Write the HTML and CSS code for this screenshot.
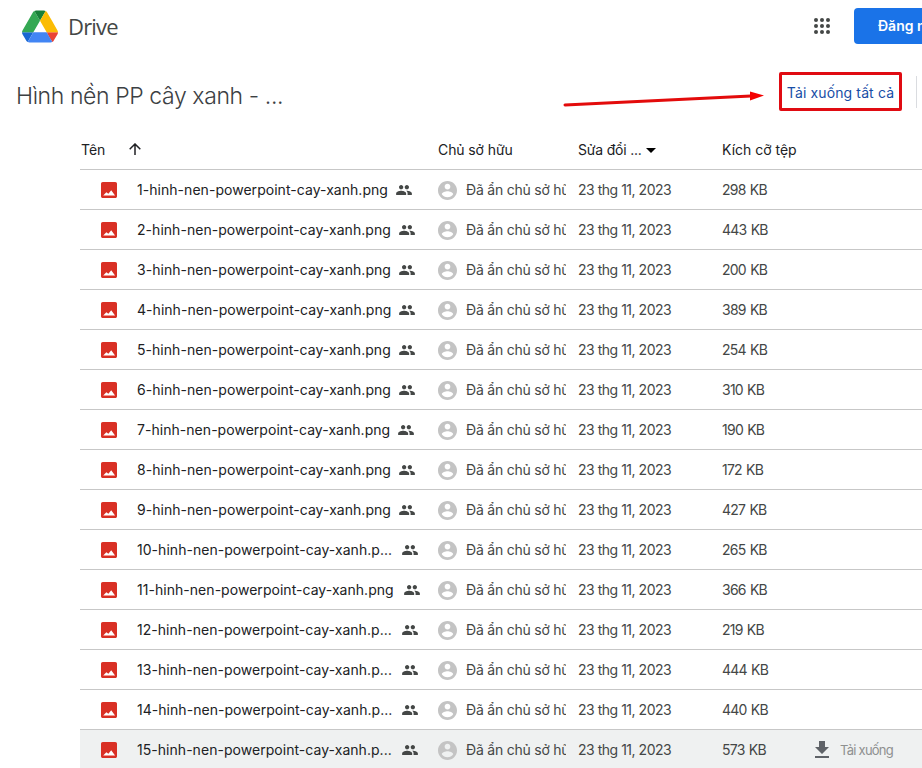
FILE: index.html
```
<!DOCTYPE html>
<html lang="vi">
<head>
    <meta charset="UTF-8">
    <meta name="viewport" content="width=device-width, initial-scale=1.0">
    <title>Hình nền PP cây xanh - Google Drive</title>
    <link rel="stylesheet" href="styles.css">
</head>
<body>
    <svg class="sprite">
        <symbol id="image" viewBox="3 3 18 18">
            <path d="M21 19V5c0-1.1-.9-2-2-2H5c-1.1 0-2 .9-2 2v14c0 1.1.9 2 2 2h14c1.1 0 2-.9 2-2z" fill="#d93025"/>
            <path d="M5.5 18.2l3.5-3.8 2.3 1.9 3.2-4.1 4.3 6z" fill="#fff"/>
        </symbol>
        <symbol id="people" viewBox="1 5 22 14">
            <path d="M16 11c1.66 0 2.99-1.34 2.99-3S17.66 5 16 5s-3 1.34-3 3 1.34 3 3 3zm-8 0c1.66 0 2.99-1.34 2.99-3S9.66 5 8 5 5 6.34 5 8s1.34 3 3 3zm0 2c-2.33 0-7 1.17-7 3.5V19h14v-2.5c0-2.33-4.67-3.5-7-3.5zm8 0c-.29 0-.62.02-.97.05 1.16.84 1.97 1.97 1.97 3.45V19h6v-2.5c0-2.33-4.67-3.5-7-3.5z"/>
        </symbol>
        <symbol id="account" viewBox="2 2 20 20">
            <path d="M12 2C6.48 2 2 6.48 2 12s4.48 10 10 10 10-4.48 10-10S17.52 2 12 2zm0 3c1.66 0 3 1.34 3 3s-1.34 3-3 3-3-1.34-3-3 1.34-3 3-3zm0 14.2c-2.5 0-4.71-1.28-6-3.22.03-1.99 4-3.08 6-3.08 1.99 0 5.97 1.09 6 3.08-1.29 1.94-3.5 3.22-6 3.22z"/>
        </symbol>
    </svg>

    <header class="topbar">
        <svg class="logo" viewBox="0 0 87.3 78">
            <path d="M6.6 66.85l3.85 6.65c.8 1.4 1.95 2.5 3.3 3.3L27.5 53H0c0 1.55.4 3.1 1.2 4.5z" fill="#1967d2"/>
            <path d="M43.65 25L29.9 1.2c-1.35.8-2.5 1.9-3.3 3.3L1.2 48.5C.4 49.9 0 51.45 0 53h27.5z" fill="#34a853"/>
            <path d="M73.55 76.8c1.35-.8 2.5-1.9 3.3-3.3l1.6-2.75 7.65-13.25c.8-1.4 1.2-2.95 1.2-4.5H59.8l5.85 11.5z" fill="#ea4335"/>
            <path d="M43.65 25L57.4 1.2C56.05.4 54.5 0 52.9 0H34.4c-1.6 0-3.15.45-4.5 1.2z" fill="#188038"/>
            <path d="M59.8 53H27.5L13.75 76.8c1.35.8 2.9 1.2 4.5 1.2h50.8c1.6 0 3.15-.45 4.5-1.2z" fill="#4285f4"/>
            <path d="M73.4 26.5L60.7 4.5c-.8-1.4-1.95-2.5-3.3-3.3L43.65 25 59.8 53h27.45c0-1.55-.4-3.1-1.2-4.5z" fill="#fbbc04"/>
        </svg>
        <span class="brand">Drive</span>
        <svg class="apps" viewBox="0 0 16 16">
            <circle cx="2" cy="2" r="2"/><circle cx="8" cy="2" r="2"/><circle cx="14" cy="2" r="2"/>
            <circle cx="2" cy="8" r="2"/><circle cx="8" cy="8" r="2"/><circle cx="14" cy="8" r="2"/>
            <circle cx="2" cy="14" r="2"/><circle cx="8" cy="14" r="2"/><circle cx="14" cy="14" r="2"/>
        </svg>
        <a class="sign-in">Đăng nhập</a>
    </header>

    <div class="titlebar">
        <h1>Hình nền PP cây xanh - ...</h1>
        <svg class="arrow" viewBox="0 0 202 20">
            <path d="M2 14L188 5" stroke="#e30b0b" stroke-width="3" stroke-linecap="round"/>
            <path d="M187 .4L201 4.6 187 9.4z" fill="#f40000"/>
        </svg>
        <a class="download-all">Tải xuống tất cả</a>
        <span class="divider"></span>
    </div>

    <main class="files">
        <div class="row head">
            <div class="sort">Tên
                <svg class="up" viewBox="0 0 12 12"><path d="M6 12V1M.7 6.3L6 1l5.3 5.3" fill="none" stroke="#202124" stroke-width="1.5"/></svg>
            </div>
            <div class="owner-head">Chủ sở hữu</div>
            <div class="modified">Sửa đổi ... <svg class="caret" viewBox="0 0 10 5"><path d="M0 0h10L5 5z"/></svg></div>
            <div>Kích cỡ tệp</div>
        </div>
        <div class="row">
            <div class="name"><svg class="type"><use href="#image"/></svg><span>1-hinh-nen-powerpoint-cay-xanh.png</span><svg class="shared"><use href="#people"/></svg></div>
            <div class="owner"><svg class="avatar"><use href="#account"/></svg><span>Đã ẩn chủ sở hữu</span></div>
            <div class="date">23 thg 11, 2023</div>
            <div class="size">298 KB</div>
        </div>
        <div class="row">
            <div class="name"><svg class="type"><use href="#image"/></svg><span>2-hinh-nen-powerpoint-cay-xanh.png</span><svg class="shared"><use href="#people"/></svg></div>
            <div class="owner"><svg class="avatar"><use href="#account"/></svg><span>Đã ẩn chủ sở hữu</span></div>
            <div class="date">23 thg 11, 2023</div>
            <div class="size">443 KB</div>
        </div>
        <div class="row">
            <div class="name"><svg class="type"><use href="#image"/></svg><span>3-hinh-nen-powerpoint-cay-xanh.png</span><svg class="shared"><use href="#people"/></svg></div>
            <div class="owner"><svg class="avatar"><use href="#account"/></svg><span>Đã ẩn chủ sở hữu</span></div>
            <div class="date">23 thg 11, 2023</div>
            <div class="size">200 KB</div>
        </div>
        <div class="row">
            <div class="name"><svg class="type"><use href="#image"/></svg><span>4-hinh-nen-powerpoint-cay-xanh.png</span><svg class="shared"><use href="#people"/></svg></div>
            <div class="owner"><svg class="avatar"><use href="#account"/></svg><span>Đã ẩn chủ sở hữu</span></div>
            <div class="date">23 thg 11, 2023</div>
            <div class="size">389 KB</div>
        </div>
        <div class="row">
            <div class="name"><svg class="type"><use href="#image"/></svg><span>5-hinh-nen-powerpoint-cay-xanh.png</span><svg class="shared"><use href="#people"/></svg></div>
            <div class="owner"><svg class="avatar"><use href="#account"/></svg><span>Đã ẩn chủ sở hữu</span></div>
            <div class="date">23 thg 11, 2023</div>
            <div class="size">254 KB</div>
        </div>
        <div class="row">
            <div class="name"><svg class="type"><use href="#image"/></svg><span>6-hinh-nen-powerpoint-cay-xanh.png</span><svg class="shared"><use href="#people"/></svg></div>
            <div class="owner"><svg class="avatar"><use href="#account"/></svg><span>Đã ẩn chủ sở hữu</span></div>
            <div class="date">23 thg 11, 2023</div>
            <div class="size">310 KB</div>
        </div>
        <div class="row">
            <div class="name"><svg class="type"><use href="#image"/></svg><span>7-hinh-nen-powerpoint-cay-xanh.png</span><svg class="shared"><use href="#people"/></svg></div>
            <div class="owner"><svg class="avatar"><use href="#account"/></svg><span>Đã ẩn chủ sở hữu</span></div>
            <div class="date">23 thg 11, 2023</div>
            <div class="size">190 KB</div>
        </div>
        <div class="row">
            <div class="name"><svg class="type"><use href="#image"/></svg><span>8-hinh-nen-powerpoint-cay-xanh.png</span><svg class="shared"><use href="#people"/></svg></div>
            <div class="owner"><svg class="avatar"><use href="#account"/></svg><span>Đã ẩn chủ sở hữu</span></div>
            <div class="date">23 thg 11, 2023</div>
            <div class="size">172 KB</div>
        </div>
        <div class="row">
            <div class="name"><svg class="type"><use href="#image"/></svg><span>9-hinh-nen-powerpoint-cay-xanh.png</span><svg class="shared"><use href="#people"/></svg></div>
            <div class="owner"><svg class="avatar"><use href="#account"/></svg><span>Đã ẩn chủ sở hữu</span></div>
            <div class="date">23 thg 11, 2023</div>
            <div class="size">427 KB</div>
        </div>
        <div class="row">
            <div class="name long"><svg class="type"><use href="#image"/></svg><span>10-hinh-nen-powerpoint-cay-xanh.p...</span><svg class="shared"><use href="#people"/></svg></div>
            <div class="owner"><svg class="avatar"><use href="#account"/></svg><span>Đã ẩn chủ sở hữu</span></div>
            <div class="date">23 thg 11, 2023</div>
            <div class="size">265 KB</div>
        </div>
        <div class="row">
            <div class="name long"><svg class="type"><use href="#image"/></svg><span>11-hinh-nen-powerpoint-cay-xanh.png</span><svg class="shared"><use href="#people"/></svg></div>
            <div class="owner"><svg class="avatar"><use href="#account"/></svg><span>Đã ẩn chủ sở hữu</span></div>
            <div class="date">23 thg 11, 2023</div>
            <div class="size">366 KB</div>
        </div>
        <div class="row">
            <div class="name long"><svg class="type"><use href="#image"/></svg><span>12-hinh-nen-powerpoint-cay-xanh.p...</span><svg class="shared"><use href="#people"/></svg></div>
            <div class="owner"><svg class="avatar"><use href="#account"/></svg><span>Đã ẩn chủ sở hữu</span></div>
            <div class="date">23 thg 11, 2023</div>
            <div class="size">219 KB</div>
        </div>
        <div class="row">
            <div class="name long"><svg class="type"><use href="#image"/></svg><span>13-hinh-nen-powerpoint-cay-xanh.p...</span><svg class="shared"><use href="#people"/></svg></div>
            <div class="owner"><svg class="avatar"><use href="#account"/></svg><span>Đã ẩn chủ sở hữu</span></div>
            <div class="date">23 thg 11, 2023</div>
            <div class="size">444 KB</div>
        </div>
        <div class="row">
            <div class="name long"><svg class="type"><use href="#image"/></svg><span>14-hinh-nen-powerpoint-cay-xanh.p...</span><svg class="shared"><use href="#people"/></svg></div>
            <div class="owner"><svg class="avatar"><use href="#account"/></svg><span>Đã ẩn chủ sở hữu</span></div>
            <div class="date">23 thg 11, 2023</div>
            <div class="size">440 KB</div>
        </div>
        <div class="row active">
            <div class="name long"><svg class="type"><use href="#image"/></svg><span>15-hinh-nen-powerpoint-cay-xanh.p...</span><svg class="shared"><use href="#people"/></svg></div>
            <div class="owner"><svg class="avatar"><use href="#account"/></svg><span>Đã ẩn chủ sở hữu</span></div>
            <div class="date">23 thg 11, 2023</div>
            <div class="size">573 KB</div>
            <div class="download"><svg viewBox="5 3 14 17"><path d="M19 9h-4V3H9v6H5l7 7 7-7zM5 18v2h14v-2H5z"/></svg>Tải xuống</div>
        </div>
    </main>
</body>
</html>
```
FILE: styles.css
```
* {
    box-sizing: border-box;
}

body {
    margin: 0;
    width: 922px;
    height: 768px;
    overflow: hidden;
    background-color: #fff;
    font-family: Inter, Roboto, sans-serif;
    font-size: 14px;
    color: #202124;
    white-space: nowrap;
}

svg {
    display: block;
    flex: none;
}

.sprite {
    position: absolute;
    width: 0;
    height: 0;
}

.topbar {
    display: flex;
    align-items: center;
    height: 52px;
    padding-left: 22px;
}

.logo {
    width: 36px;
    height: 33px;
}

.brand {
    margin: -1px 0 0 10px;
    font-family: "Open Sans", sans-serif;
    font-size: 22px;
    letter-spacing: -0.8px;
    color: #444746;
}

.apps {
    width: 16px;
    height: 16px;
    margin-left: auto;
    fill: #444746;
}

.sign-in {
    flex: none;
    width: 68px;
    height: 36px;
    margin-left: 24px;
    padding-left: 24px;
    overflow: hidden;
    border-radius: 4px 0 0 4px;
    background-color: #1a73e8;
    color: #fff;
    font-weight: 600;
    line-height: 36px;
}

.titlebar {
    display: flex;
    align-items: center;
    height: 79px;
    padding-left: 16px;
}

h1 {
    width: 547px;
    margin: 8px 0 0;
    font-size: 23px;
    font-weight: 300;
    letter-spacing: -0.4px;
    color: #3c4043;
}

.arrow {
    width: 202px;
    height: 20px;
    margin-top: 19px;
}

.download-all {
    width: 123px;
    height: 39px;
    margin-left: 14px;
    border: 3px solid #e00b12;
    border-radius: 2px;
    color: #174ea6;
    letter-spacing: 0.12px;
    line-height: 35px;
    text-align: center;
}

.divider {
    width: 1px;
    height: 32px;
    margin-left: 14px;
    background-color: #dadce0;
}

.files {
    margin-left: 80px;
}

.row {
    display: grid;
    grid-template-columns: 358px 140px 144px 91px 1fr;
    align-items: center;
    height: 40px;
    border-bottom: 1px solid #c7c7c7;
    color: #444746;
}

.row.head {
    height: 39px;
    padding-bottom: 2px;
    color: #202124;
}

.row.active {
    background-color: #eff1f1;
}

.sort,
.name,
.owner,
.download {
    display: flex;
    align-items: center;
}

.sort {
    padding-left: 1px;
}

.up {
    width: 12px;
    height: 12px;
    margin: -1px 0 0 24px;
}

.owner-head {
    letter-spacing: -0.1px;
}

.modified {
    letter-spacing: -0.2px;
}

.caret {
    display: inline-block;
    width: 10px;
    height: 5px;
    margin: 0 0 2px 1px;
}

.name {
    padding-left: 21px;
    letter-spacing: 0.04px;
    color: #202124;
}

.type {
    width: 16px;
    height: 16px;
    margin-right: 20px;
}

.shared {
    width: 16px;
    height: 10px;
    margin: 1px 0 0 8px;
    fill: #444746;
}

.long .shared {
    margin-left: 10px;
}

.avatar {
    width: 19px;
    height: 19px;
    margin: 1px 9px 0 0;
    fill: #c4c4c4;
}

.owner span {
    width: 100px;
    overflow: hidden;
    letter-spacing: -0.22px;
}

.date {
    letter-spacing: -0.48px;
}

.size {
    letter-spacing: -0.75px;
    word-spacing: 1px;
}

.download {
    font-size: 13px;
    letter-spacing: -0.75px;
    color: #8e9090;
}

.download svg {
    width: 14px;
    height: 17px;
    margin: 0 11px 0 2px;
    fill: #5f6368;
}
```
